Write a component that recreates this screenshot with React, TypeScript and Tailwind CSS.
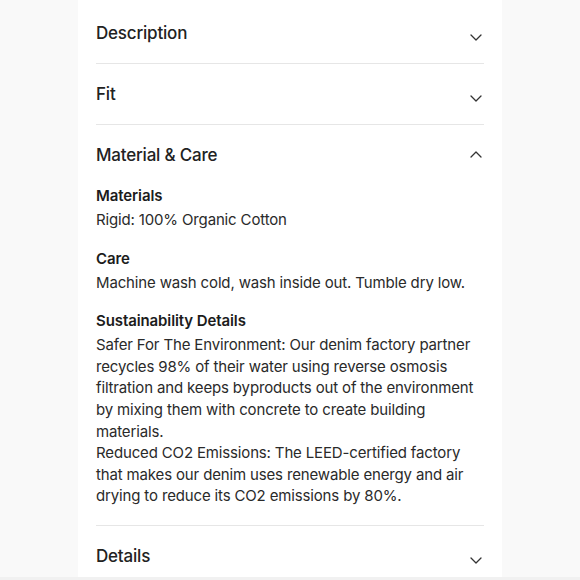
import { ReactNode } from 'react'

function Chevron({ up }: { up?: boolean }) {
  return (
    <svg width="12" height="7" viewBox="0 0 12 7" fill="none" className={up ? 'mt-[-2px]' : 'mt-[9px]'}>
      <path
        d={up ? 'M1 6L6 1L11 6' : 'M1 1L6 6L11 1'}
        stroke="#333"
        strokeWidth="1.3"
        strokeLinecap="round"
        strokeLinejoin="round"
      />
    </svg>
  )
}

function Section({ title, open, children }: { title: string; open?: boolean; children?: ReactNode }) {
  return (
    <div className="border-b border-[#e6e6e6]">
      <div className="flex items-center justify-between py-5">
        <h3 className="text-[17px] leading-5 font-medium text-[#222] tracking-[-0.2px]">{title}</h3>
        <div className="pr-[2px]">
          <Chevron up={open} />
        </div>
      </div>
      {open && <div className="pb-[18px]">{children}</div>}
    </div>
  )
}

function Block({ label, children }: { label: string; children: ReactNode }) {
  return (
    <div className="mt-[17px] first:mt-0">
      <p className="text-[15px] leading-[22px] font-semibold text-[#1c1c1c] mb-[2px] tracking-[-0.1px]">{label}</p>
      <div className="text-[15px] leading-[21.6px] text-[#2a2a2a] tracking-[-0.15px]">{children}</div>
    </div>
  )
}

export default function App() {
  return (
    <div
      className="w-[580px] h-[580px] overflow-hidden bg-[#f9f9f9] flex flex-col items-center"
      style={{ fontFamily: 'Inter, "Noto Sans", sans-serif' }}
    >
      <div className="w-[424px] h-[577px] bg-white px-[18px] pt-[3px] shrink-0">
        <Section title="Description" />
        <Section title="Fit" />
        <Section title="Material & Care" open>
          <Block label="Materials">
            <p>Rigid: 100% Organic Cotton</p>
          </Block>
          <Block label="Care">
            <p>Machine wash cold, wash inside out. Tumble dry low.</p>
          </Block>
          <Block label="Sustainability Details">
            <p>
              Safer For The Environment: Our denim factory partner recycles 98% of their water using reverse
              osmosis filtration and keeps byproducts out of the environment by mixing them with concrete to
              create building materials.
            </p>
            <p>
              Reduced CO2 Emissions: The LEED-certified factory that makes our denim uses renewable energy and
              air drying to reduce its CO2 emissions by 80%.
            </p>
          </Block>
        </Section>
        <Section title="Details" />
      </div>
      <div className="w-full flex-1 bg-[#f1f1f1]" />
    </div>
  )
}
